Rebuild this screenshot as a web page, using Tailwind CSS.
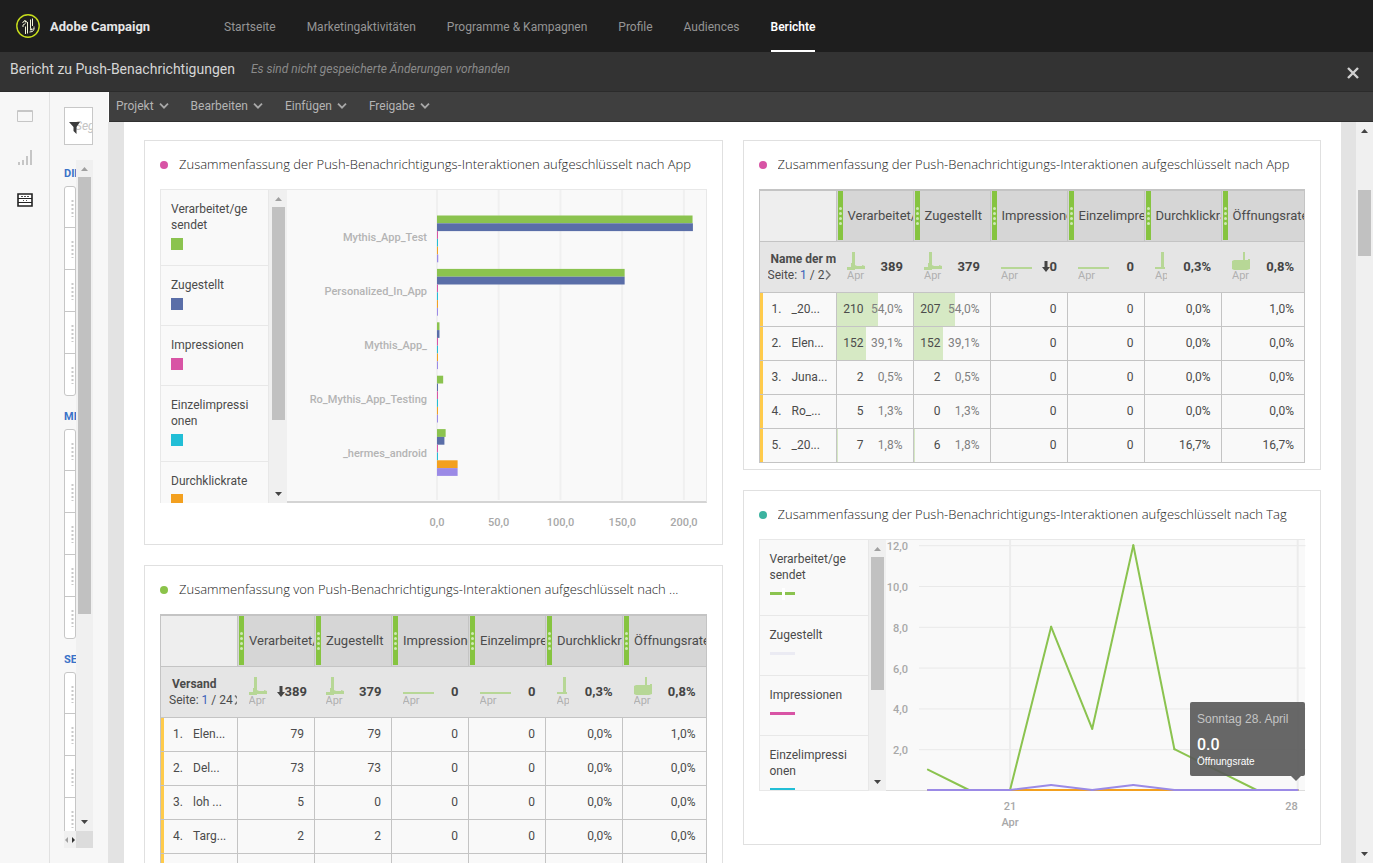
<!DOCTYPE html>
<html lang="de">
<head>
    <meta charset="utf-8">
    <title>Adobe Campaign - Bericht zu Push-Benachrichtigungen</title>
    <script src="https://cdn.jsdelivr.net/npm/@tailwindcss/browser@4"></script>
</head>
<body class="h-screen flex flex-col overflow-hidden bg-white font-[Roboto,sans-serif] text-xs text-[#4b4b4b]">

    <!-- Top navigation -->
    <header class="flex items-center h-[52px] shrink-0 bg-[#1e1e1e] pl-4">
        <svg class="size-6 shrink-0" viewBox="0 0 24 24" fill="none">
            <circle cx="12" cy="12" r="11.2" stroke="#c6dc1c" stroke-width="1.4"/>
            <path d="M9.5 20V12.500M11.500 19.500V8M11.500 8.500L8.500 6.500L6.500 9M9.500 9.500L7 11V13M14.500 14V5.500M16.500 12V4.500M14.500 14C14.500 16 18.500 16 18 12.500M13.500 18L16.500 17.500L18.500 14.500" stroke="#f2f4d8" stroke-width="1"/>
            <circle cx="9.500" cy="7.500" r="1" fill="#f2f4d8"/>
            <circle cx="15" cy="15.500" r="1" fill="#f2f4d8"/>
        </svg>
        <span class="ml-[10px] w-[174px] pt-px text-[13px] font-bold text-[#e6e6e6]">Adobe Campaign</span>
        <nav class="flex h-full gap-[31px] text-[#959595]">
            <a href="#" class="flex items-center pt-[2px]">Startseite</a>
            <a href="#" class="flex items-center pt-[2px]">Marketingaktivitäten</a>
            <a href="#" class="flex items-center pt-[2px]">Programme &amp; Kampagnen</a>
            <a href="#" class="flex items-center pt-[2px]">Profile</a>
            <a href="#" class="flex items-center pt-[2px]">Audiences</a>
            <a href="#" class="flex items-center border-b-2 border-white pt-1 font-semibold text-white">Berichte</a>
        </nav>
    </header>

    <!-- Report title bar -->
    <div class="flex items-start h-10 shrink-0 bg-[#333] border-b border-[#2b2b2b] pl-[10px] pr-[14px] pt-[7px]">
        <h1 class="text-sm text-[#d6d6d6]">Bericht zu Push-Benachrichtigungen</h1>
        <p class="ml-4 text-xs leading-5 italic text-[#8a8a8a]">Es sind nicht gespeicherte Änderungen vorhanden</p>
        <button class="ml-auto mt-2" aria-label="Schließen">
            <svg class="size-3" viewBox="0 0 12 12" stroke="#d0d0d0" stroke-width="2.4"><path d="M1 1l10 10M11 1L1 11"/></svg>
        </button>
    </div>

    <div class="flex flex-1 min-h-0">
        <!-- Icon rail -->
        <aside class="flex flex-col items-center w-[50px] shrink-0 bg-[#f7f7f7] border-r border-[#e1e1e1] pt-[16px] gap-[26px]">
            <button aria-label="Panels"><svg class="size-4" viewBox="0 0 16 16" fill="none" stroke="#c6c6c6"><path d="M.5 2.500h15v11h-15zM.5 3.500h15"/></svg></button>
            <button aria-label="Visualisierungen"><svg class="size-4" viewBox="0 0 16 16" fill="#c6c6c6"><path d="M1 12h2v3H1zM5 10h2v5H5zM9 6h2v9H9zM13 0h2v15h-2z"/></svg></button>
            <button aria-label="Komponenten"><svg class="size-4" viewBox="0 0 16 16" fill="none" stroke="#222"><path d="M1 2h14v12H1z" fill="#fff" stroke-width="1.600"/><path d="M1 6.500h14M1 10.500h14"/><path d="M4 4.500h2M7 4.500h2M10 4.500h2M6 8.500h1M9 8.500h1" stroke="#555"/></svg></button>
        </aside>

        <!-- Component panel -->
        <aside class="flex flex-col w-[58px] shrink-0 bg-[#f7f7f7] pl-[14px] pr-[15px] pt-[15px] pb-[15px]">
            <label class="relative flex h-[38px] shrink-0 border border-[#c8c8c8] bg-white">
                <svg class="absolute left-1 top-[14px] size-3" viewBox="0 0 12 12" fill="#3c3c3c"><path d="M0 0h11L7.500 5v7L4.500 9V5z"/></svg>
                <input type="text" placeholder="Segment suchen" aria-label="Segment suchen" class="w-full min-w-0 pl-[10px] text-xs italic placeholder:text-[#c4c4c4] outline-none">
            </label>
            <div class="flex flex-1 min-h-0 mt-[15px]">
                <div id="components" class="w-3 overflow-hidden"></div>
                <div class="flex flex-col items-center flex-1 bg-[#f0f0f0] pt-[7px] pb-[7px]">
                    <svg class="w-[7px] h-1 shrink-0" viewBox="0 0 7 4" fill="#a0a0a0"><path d="M0 4L3.500 0L7 4z"/></svg>
                    <div class="mt-[6px] mb-[206px] flex-1 w-[13px] bg-[#c1c1c1]"></div>
                    <svg class="w-[7px] h-1 shrink-0" viewBox="0 0 7 4" fill="#444"><path d="M0 0h7L3.500 4z"/></svg>
                </div>
            </div>
            <div class="flex h-[17px] shrink-0 bg-[#dcdcdc]">
                <div class="flex items-center justify-between w-3 bg-[#f0f0f0] px-px">
                    <svg class="w-[3px] h-[6px]" viewBox="0 0 3 6" fill="#a0a0a0"><path d="M3 0v6L0 3z"/></svg>
                    <svg class="w-[3px] h-[6px]" viewBox="0 0 3 6" fill="#333"><path d="M0 0v6L3 3z"/></svg>
                </div>
            </div>
        </aside>

        <div class="flex flex-col flex-1 min-w-0">
            <!-- Menu bar -->
            <div class="flex items-center h-[30px] shrink-0 ml-px bg-[#3f3f3f] border-b border-[#303030] pl-[7px] pb-px gap-[22px] text-[#b4b4b4]">
                <button class="flex items-center gap-[5px]">Projekt <svg class="w-[10px] h-[6px]" viewBox="0 0 10 6" fill="none" stroke="#a8a8a8" stroke-width="1.800"><path d="M1 .7L5 4.700L9 .7"/></svg></button>
                <button class="flex items-center gap-[5px]">Bearbeiten <svg class="w-[10px] h-[6px]" viewBox="0 0 10 6" fill="none" stroke="#a8a8a8" stroke-width="1.800"><path d="M1 .7L5 4.700L9 .7"/></svg></button>
                <button class="flex items-center gap-[5px]">Einfügen <svg class="w-[10px] h-[6px]" viewBox="0 0 10 6" fill="none" stroke="#a8a8a8" stroke-width="1.800"><path d="M1 .7L5 4.700L9 .7"/></svg></button>
                <button class="flex items-center gap-[5px]">Freigabe <svg class="w-[10px] h-[6px]" viewBox="0 0 10 6" fill="none" stroke="#a8a8a8" stroke-width="1.800"><path d="M1 .7L5 4.700L9 .7"/></svg></button>
            </div>

            <div class="flex flex-1 min-h-0">
                <main class="flex-1 min-w-0 overflow-hidden bg-white border-l-[16px] border-r-[15px] border-[#e3e3e3] px-5 pt-[18px]">
                    <div class="grid grid-cols-2 gap-5">
                        <div class="flex flex-col gap-5 min-w-0">
                            <!-- Interactions by app, bar chart -->
                            <section class="border border-[#e0e0e0] px-[15px] pb-[15px]">
                                <h2 class="flex items-center h-12 gap-[11px] font-['Open_Sans',sans-serif] text-[13px] font-light text-[#222]">
                                    <span class="size-2 shrink-0 rounded-full bg-[#d854a5]"></span>
                                    <span class="truncate">Zusammenfassung der Push-Benachrichtigungs-Interaktionen aufgeschlüsselt nach App</span>
                                </h2>
                                <div class="flex h-[314px] border-t border-[#e8e8e8]">
                                    <ul class="w-[109px] shrink-0 overflow-hidden bg-[#f9f9f9] border-x border-[#e8e8e8] leading-4" data-legend="square"></ul>
                                    <div class="flex flex-col items-center w-[18px] shrink-0 bg-[#f0f0f0] pt-[7px] pb-[7px]">
                                        <svg class="w-[7px] h-1 shrink-0" viewBox="0 0 7 4" fill="#a0a0a0"><path d="M0 4L3.500 0L7 4z"/></svg>
                                        <div class="mt-[6px] w-[13px] h-[213px] bg-[#c1c1c1]"></div>
                                        <svg class="mt-auto w-[7px] h-1 shrink-0" viewBox="0 0 7 4" fill="#444"><path d="M0 0h7L3.500 4z"/></svg>
                                    </div>
                                    <div class="flex flex-1 min-w-0 bg-[#f9f9f9] border-r border-b-2 border-r-[#e8e8e8] border-b-[#d4d4d4]">
                                        <ul class="w-[150px] shrink-0 pt-[21px] pr-[10px] text-right text-[11px] leading-[54px] font-medium text-[#b4b4b4]">
                                            <li>Mythis_App_Test</li>
                                            <li>Personalized_In_App</li>
                                            <li>Mythis_App_</li>
                                            <li>Ro_Mythis_App_Testing</li>
                                            <li>_hermes_android</li>
                                        </ul>
                                        <svg id="barChart" class="flex-1 min-w-0 h-full overflow-visible"></svg>
                                    </div>
                                </div>
                                <div class="h-[26px]"></div>
                            </section>

                            <!-- Interactions by delivery, table -->
                            <section class="border border-[#e0e0e0] px-[15px] pb-[6px]">
                                <h2 class="flex items-center h-12 gap-[11px] font-['Open_Sans',sans-serif] text-[13px] font-light text-[#222]">
                                    <span class="size-2 shrink-0 rounded-full bg-[#8bc34a]"></span>
                                    <span class="truncate">Zusammenfassung von Push-Benachrichtigungs-Interaktionen aufgeschlüsselt nach ...</span>
                                </h2>
                                <table class="w-full table-fixed border-collapse border border-t-2 border-[#c4c4c4]" data-table="delivery"></table>
                            </section>
                        </div>

                        <div class="flex flex-col gap-5 min-w-0">
                            <!-- Interactions by app, table -->
                            <section class="border border-[#e0e0e0] px-[15px] pb-[6px]">
                                <h2 class="flex items-center h-12 gap-[11px] font-['Open_Sans',sans-serif] text-[13px] font-light text-[#222]">
                                    <span class="size-2 shrink-0 rounded-full bg-[#d854a5]"></span>
                                    <span class="truncate">Zusammenfassung der Push-Benachrichtigungs-Interaktionen aufgeschlüsselt nach App</span>
                                </h2>
                                <table class="w-full table-fixed border-collapse border border-t-2 border-[#c4c4c4]" data-table="app"></table>
                            </section>

                            <!-- Interactions by day, line chart -->
                            <section class="border border-[#e0e0e0] px-[15px] pb-[15px]">
                                <h2 class="flex items-center h-12 gap-[11px] font-['Open_Sans',sans-serif] text-[13px] font-light text-[#222]">
                                    <span class="size-2 shrink-0 rounded-full bg-[#3bb3a0]"></span>
                                    <span class="truncate">Zusammenfassung der Push-Benachrichtigungs-Interaktionen aufgeschlüsselt nach Tag</span>
                                </h2>
                                <div class="flex h-[252px] border-t border-[#e8e8e8]">
                                    <ul class="w-[110px] shrink-0 overflow-hidden bg-[#f9f9f9] border border-t-0 border-[#e8e8e8] leading-4" data-legend="line"></ul>
                                    <div class="flex flex-col items-center w-[17px] shrink-0 bg-[#f0f0f0] pt-[7px] pb-[7px]">
                                        <svg class="w-[7px] h-1 shrink-0" viewBox="0 0 7 4" fill="#a0a0a0"><path d="M0 4L3.500 0L7 4z"/></svg>
                                        <div class="mt-[6px] w-[13px] h-[133px] bg-[#c1c1c1]"></div>
                                        <svg class="mt-auto w-[7px] h-1 shrink-0" viewBox="0 0 7 4" fill="#444"><path d="M0 0h7L3.500 4z"/></svg>
                                    </div>
                                    <div class="relative flex flex-1 min-w-0 bg-[#f9f9f9] border-b border-[#dcdcdc]">
                                        <svg id="lineAxis" class="w-[33px] shrink-0 h-full overflow-visible"></svg>
                                        <svg id="lineChart" class="flex-1 min-w-0 h-full overflow-visible"></svg>
                                        <div class="absolute right-0 bottom-[14px] w-[115px] h-[74px] rounded-[2px] bg-[#5a5a5a]/92 px-[7px] pt-2 font-['Liberation_Sans',sans-serif] text-white">
                                            <p class="text-xs leading-[18px] text-[#c4c4c4]">Sonntag 28. April</p>
                                            <p class="mt-2 font-[Roboto,sans-serif] text-base leading-[18px] font-medium">0.0</p>
                                            <p class="text-[10px] leading-4">Öffnungsrate</p>
                                            <svg class="absolute top-full right-1 w-[10px] h-[5px]" viewBox="0 0 10 5" fill="#666"><path d="M0 0h10L5 5z"/></svg>
                                        </div>
                                    </div>
                                </div>
                                <div class="h-[38px]"></div>
                            </section>
                        </div>
                    </div>
                </main>

                <!-- Page scrollbar -->
                <div class="flex flex-col items-center w-[17px] shrink-0 bg-[#f0f0f0] pt-[7px] pb-[7px]">
                    <svg class="w-[7px] h-1 shrink-0" viewBox="0 0 7 4" fill="#444"><path d="M0 4L3.500 0L7 4z"/></svg>
                    <div class="mt-[57px] w-[13px] h-[66px] bg-[#c1c1c1]"></div>
                    <svg class="mt-auto w-[7px] h-1 shrink-0" viewBox="0 0 7 4" fill="#444"><path d="M0 0h7L3.500 4z"/></svg>
                </div>
            </div>
        </div>
    </div>

    <script>
const COLORS = ['#8bc34f', '#5a6ea8', '#d854a5', '#22bed6', '#f3a01f', '#9b8ae6']

// Component panel groups
document.getElementById('components').innerHTML = [['DIMENSIONEN', 5], ['METRIKEN', 5], ['SEGMENTE', 5]].map(([name, count], i) => `
  <h3 class="${i ? 'mt-[13px]' : 'mt-[6px]'} mb-1 text-[11px] leading-4 font-bold text-[#3a72c8]">${name}</h3>
  <ul class="border border-[#c6c6c6] rounded-[3px] bg-white divide-y divide-[#c6c6c6]">
    ${`<li class="flex justify-end h-[42px] first:h-[41px] last:h-[41px] pt-[12px] pr-px">
      <svg class="w-[3px] h-[18px]" viewBox="0 0 3 18" stroke="#c8c8c8" stroke-dasharray="2 2"><path d="M1.500 1v18" stroke-width="2"/></svg>
    </li>`.repeat(count)}
  </ul>`).join('')

// Legends
const LEGEND = ['Verarbeitet/ge<br>sendet', 'Zugestellt', 'Impressionen', 'Einzelimpressi<br>onen', 'Durchklickrate']
const SQUARES = LEGEND.map((_, i) => `<rect width="12" height="12" fill="${COLORS[i]}"/>`)
const LINES = LEGEND.map((_, i) => `<rect y="4" width="25" height="3" fill="${i === 1 ? '#ebebf3' : COLORS[i]}"/>`)
LINES[0] += '<rect x="12" width="3" height="12" fill="#fff"/>'

document.querySelectorAll('[data-legend]').forEach(list => {
  const swatches = list.dataset.legend === 'line' ? LINES : SQUARES
  list.innerHTML = LEGEND.map((label, i) => `
    <li class="border-b border-[#e8e8e8] pl-[10px] pt-[11px] pb-[15px]">
      ${label}
      <svg class="mt-[5px] w-[25px] h-3">${swatches[i]}</svg>
    </li>`).join('')
})

// Bar chart: one group of six bars per app
const APPS = [
  [207, 207.3, .8, .8, .8, 1],
  [152, 152, .8, .8, .8, .8],
  [2, 2, .8, .8, .8, .8],
  [5, .8, .8, .8, .8, .8],
  [7, 6, .8, .8, 16.7, 16.7]
]
const percent = value => (value / 217.5 * 100) + '%'
let bars = ''
for (let tick = 0; tick <= 200; tick += 50) {
  bars += `<rect x="${percent(tick)}" y="0" width="2" height="310" fill="#f0f0f0" transform="translate(-1)"/>
    <text x="${percent(tick)}" y="336" text-anchor="middle" font-size="11" fill="#a8a8a8" class="font-medium">${tick},0</text>`
}
APPS.forEach((values, app) => values.forEach((value, i) => {
  bars += `<rect x="0" y="${25.5 + app * 53.4 + i * 7.8}" width="${percent(value)}" height="7.8" fill="${COLORS[i]}"/>`
}))
document.getElementById('barChart').innerHTML = bars

// Line chart: 20.4px per unit, ten days
const y = value => 250 - value * 20.4
const x = day => (2.3 + day * 10.63) + '%'
const polyline = (values, color) => values.slice(1).map((value, i) =>
  `<line x1="${x(i)}" y1="${y(values[i])}" x2="${x(i + 1)}" y2="${y(value)}" stroke="${color}" stroke-width="2" stroke-linecap="round"/>`).join('')

let axis = ''
let lines = ''
for (let tick = 2; tick <= 12; tick += 2) {
  axis += `<text x="22" y="${y(tick) + 5}" text-anchor="end" font-size="11" fill="#a8a8a8" class="font-medium">${tick},0</text>`
  lines += `<rect y="${y(tick)}" width="100%" height="1" fill="#e9e9e9"/>`
}
lines += `<line x1="${x(2)}" x2="${x(2)}" y1="0" y2="250" stroke="#ececec" stroke-width="2"/>
  <line x1="${x(9)}" x2="${x(9)}" y1="0" y2="250" stroke="#ececec" stroke-width="2"/>
  <text x="${x(2)}" y="270" text-anchor="middle" font-size="11" fill="#a8a8a8" class="font-medium">21</text>
  <text x="${x(2)}" y="286" text-anchor="middle" font-size="11" fill="#a8a8a8" class="font-medium">Apr</text>
  <text x="${x(9)}" y="270" text-anchor="end" font-size="11" fill="#a8a8a8" class="font-medium">28</text>`
lines += polyline([1, 0, 0, 8, 3, 12, 2, 1, 0, 0], COLORS[0])
lines += polyline([0, 0, 0, 0, 0, 0, 0, 0, 0, 0], COLORS[4])
lines += polyline([0, 0, 0, .25, 0, .25, 0, 0, 0, 0], COLORS[5])
document.getElementById('lineAxis').innerHTML = axis
document.getElementById('lineChart').innerHTML = lines

// Freeform tables
const COLUMNS = ['Verarbeitet/gesendet', 'Zugestellt', 'Impressionen', 'Einzelimpressionen', 'Durchklickrate', 'Öffnungsrate']
const TOTALS = ['389', '379', '0', '0', '0,3%', '0,8%']
const SPIKE = '<path d="M0 18V15H4V11H5V0H8V13L10 14H15V13L18 14V17H8V18z"/>'
const FLAT = '<path d="M0 15h31v2H0z"/>'
const SPARKS = [SPIKE, SPIKE, FLAT, FLAT, '<path d="M0 15h6V0h3v15h1v2H0z"/>', '<path d="M0 9l2-1h9V0h2v8h3V7h2v10l-3 1H2l-2-1z"/>']
const TABLES = {
  app: {
    name: 'Name der mobilen App', pages: '2', sorted: 2,
    rows: [
      ['_20...', ['210', '54,0%'], ['207', '54,0%'], '0', '0', '0,0%', '1,0%'],
      ['Elen...', ['152', '39,1%'], ['152', '39,1%'], '0', '0', '0,0%', '0,0%'],
      ['Juna...', ['2', '0,5%'], ['2', '0,5%'], '0', '0', '0,0%', '0,0%'],
      ['Ro_...', ['5', '1,3%'], ['0', '1,3%'], '0', '0', '0,0%', '0,0%'],
      ['_20...', ['7', '1,8%'], ['6', '1,8%'], '0', '0', '16,7%', '16,7%']
    ]
  },
  delivery: {
    name: 'Versand', pages: '24', sorted: 0,
    rows: [
      ['Elen...', '79', '79', '0', '0', '0,0%', '1,0%'],
      ['Del...', '73', '73', '0', '0', '0,0%', '0,0%'],
      ['loh ...', '5', '0', '0', '0', '0,0%', '0,0%'],
      ['Targ...', '2', '2', '0', '0', '0,0%', '0,0%'],
      ['Push...', '1', '1', '0', '0', '0,0%', '0,0%']
    ]
  }
}

function metricCell(value) {
  if (!Array.isArray(value)) {
    return `<td class="border border-[#c4c4c4] pr-[10px] text-right">${value}</td>`
  }
  const share = parseFloat(value[1].replace(',', '.'))
  return `<td class="relative border border-[#c4c4c4] p-0">
    <div class="absolute inset-y-0 left-0 bg-[#d6e9c4]" style="width: ${share > 1.5 ? share : 0}%"></div>
    <div class="relative flex justify-end pr-[10px]"><span>${value[0]}</span><span class="w-[39px] text-right text-[#808080]">${value[1]}</span></div>
  </td>`
}

document.querySelectorAll('[data-table]').forEach(table => {
  const data = TABLES[table.dataset.table]
  table.innerHTML = `
    <thead>
      <tr class="h-[51px] bg-[#d6d6d6] text-[13px]">
        <td class="w-[77px] border border-t-2 border-[#c4c4c4] bg-[#eee]"></td>
        ${COLUMNS.map((label, i) => `
        <th scope="col" class="${i < 5 ? 'w-[77px]' : ''} border border-t-2 border-[#c4c4c4] p-0 pl-px text-left font-normal">
          <div class="flex items-center h-[49px] overflow-hidden">
            <svg class="w-[5px] h-full shrink-0" viewBox="0 0 5 49"><path d="M0 0h5v49H0z" fill="#86c440"/><g fill="#cfe8b4"><circle cx="2.500" cy="17.500" r="1.500"/><circle cx="2.500" cy="22.500" r="1.500"/><circle cx="2.500" cy="27.500" r="1.500"/><circle cx="2.500" cy="32.500" r="1.500"/></g></svg>
            <span class="pl-[5px] whitespace-nowrap">${label}</span>
          </div>
        </th>`).join('')}
      </tr>
      <tr class="h-[51px] bg-[#e5e5e5]">
        <th scope="col" class="border border-r-0 border-[#c4c4c4] p-0 pl-2 text-left font-normal leading-4 whitespace-nowrap">
          <div class="w-[68px] overflow-hidden">
            <strong class="pl-[3px] font-bold">${data.name}</strong>
            <div class="flex items-center">Seite:&nbsp;<span class="text-[#3a62b8]">1</span>&nbsp;/ ${data.pages}
              <svg class="ml-px w-[6px] h-[10px] shrink-0" viewBox="0 0 6 10" fill="none" stroke="#777" stroke-width="1.500"><path d="M1 .5L5 5L1 9.500"/></svg>
            </div>
          </div>
        </th>
        ${TOTALS.map((total, i) => `
        <td class="border-y border-[#c4c4c4] p-0 pl-[11px] pr-[10px]">
          <div class="flex items-center justify-between">
            <div class="w-7 shrink-0">
              <svg class="w-[31px] h-[18px] overflow-visible" viewBox="0 0 31 18" fill="#b7d796">${SPARKS[i]}</svg>
              <div class="overflow-hidden text-[11px] leading-3 text-[#b0b0b0] ${i === 4 ? 'w-3' : 'w-5'}">Apr</div>
            </div>
            <div class="flex items-center text-[13px] font-bold text-[#444]">
              ${i === data.sorted ? '<svg class="w-2 h-[11px]" viewBox="0 0 8 11" fill="#444"><path d="M2.500 0h3v6H8L4 11L0 6h2.500z"/></svg>' : ''}${total}
            </div>
          </div>
        </td>`).join('')}
      </tr>
    </thead>
    <tbody>
      ${data.rows.map((row, n) => `
      <tr class="h-[34px] bg-[#f9f9f9]">
        <th scope="row" class="border border-[#c4c4c4] p-0 text-left font-normal whitespace-nowrap">
          <div class="flex items-center h-[33px] border-l-[3px] border-[#ffcb4b] pl-[9px]">
            <span class="w-5">${n + 1}.</span><span>${row[0]}</span>
          </div>
        </th>
        ${row.slice(1).map(metricCell).join('')}
      </tr>`).join('')}
    </tbody>`
})
    </script>
</body>
</html>
